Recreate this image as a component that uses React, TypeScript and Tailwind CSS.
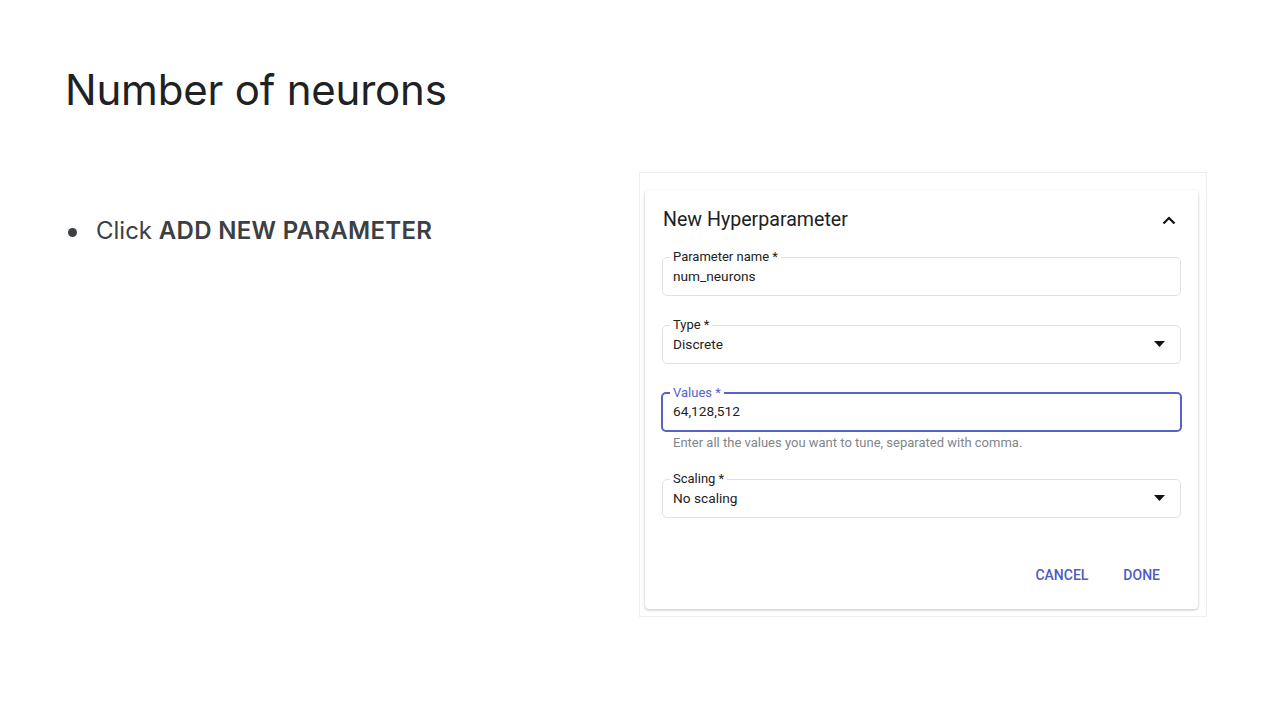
import React from "react";

function Field({
  label,
  value,
  active,
  select,
}: {
  label: string;
  value: string;
  active?: boolean;
  select?: boolean;
}) {
  return (
    <fieldset
      className={`h-[45px] rounded-[5px] pl-[7px] pr-[10px] ${
        active ? "border-2 border-[#5563c9] -mx-[1px] pl-[6px]" : "border border-[#e2e2e2]"
      }`}
    >
      <legend
        className={`px-[3px] text-[13px] leading-[12px] ${
          active ? "text-[#5563c9]" : "text-[#222]"
        }`}
      >
        {label}
      </legend>
      <div className={`flex items-center justify-between pl-[3px] ${active ? "mt-[2px]" : "mt-[3px]"}`}>
        <span className="text-[13.7px] leading-[20px] text-[#222]">{value}</span>
        {select && (
          <svg width="11" height="6" viewBox="0 0 11 6" className="mr-[5px]">
            <path d="M0 0 L11 0 L5.5 6 Z" fill="#111" />
          </svg>
        )}
      </div>
    </fieldset>
  );
}

export default function App() {
  return (
    <div className="w-[1280px] h-[720px] bg-white flex overflow-hidden">
      <div className="flex-1 pl-[65px] pt-[66px]" style={{ fontFamily: "Inter, sans-serif" }}>
        <h1 className="text-[42px] leading-[48px] text-[#202124] font-normal tracking-[-0.2px]">
          Number of neurons
        </h1>
        <div className="mt-[101px] flex items-center text-[24px] leading-[32px] text-[#3c4043]">
          <span className="w-[9px] h-[9px] rounded-full bg-[#3c4043] ml-[3px] mr-[19px] mt-[2px]" />
          <span>
            Click <span className="font-semibold tracking-[0.3px]">ADD NEW PARAMETER</span>
          </span>
        </div>
      </div>

      <div className="mt-[172px] mr-[73px] w-[568px] h-[445px] border border-[#eeeeee] pl-[5px] pr-[8px] pt-[17px]">
        <div
          className="h-[419px] rounded-[4px] bg-white shadow-[0_1px_3px_rgba(0,0,0,0.25)] px-[17px]"
          style={{ fontFamily: "Roboto, sans-serif" }}
        >
          <div className="flex items-center justify-between h-[61px] pb-[1px] pl-[1px]">
            <span className="text-[19.6px] text-[#202124]">New Hyperparameter</span>
            <svg width="14" height="9" viewBox="0 0 14 9" className="mr-[5px]">
              <path d="M1.5 7.5 L7 2 L12.5 7.5" stroke="#111" strokeWidth="2.2" fill="none" />
            </svg>
          </div>
          <div className="flex flex-col">
            <Field label="Parameter name *" value="num_neurons" />
            <div className="h-[23px]" />
            <Field label="Type *" value="Discrete" select />
            <div className="h-[23px]" />
            <Field label="Values *" value="64,128,512" active />
            <div className="text-[13px] leading-[16px] text-[#80868b] mt-[3px] ml-[11px]">
              Enter all the values you want to tune, separated with comma.
            </div>
            <div className="h-[22px]" />
            <Field label="Scaling *" value="No scaling" select />
          </div>
          <div className="flex justify-end gap-[35px] mt-[47px] pr-[21px]">
            <span className="text-[14px] leading-[20px] font-medium text-[#4f5bc4]">CANCEL</span>
            <span className="text-[14px] leading-[20px] font-medium text-[#4f5bc4]">DONE</span>
          </div>
        </div>
      </div>
    </div>
  );
}
